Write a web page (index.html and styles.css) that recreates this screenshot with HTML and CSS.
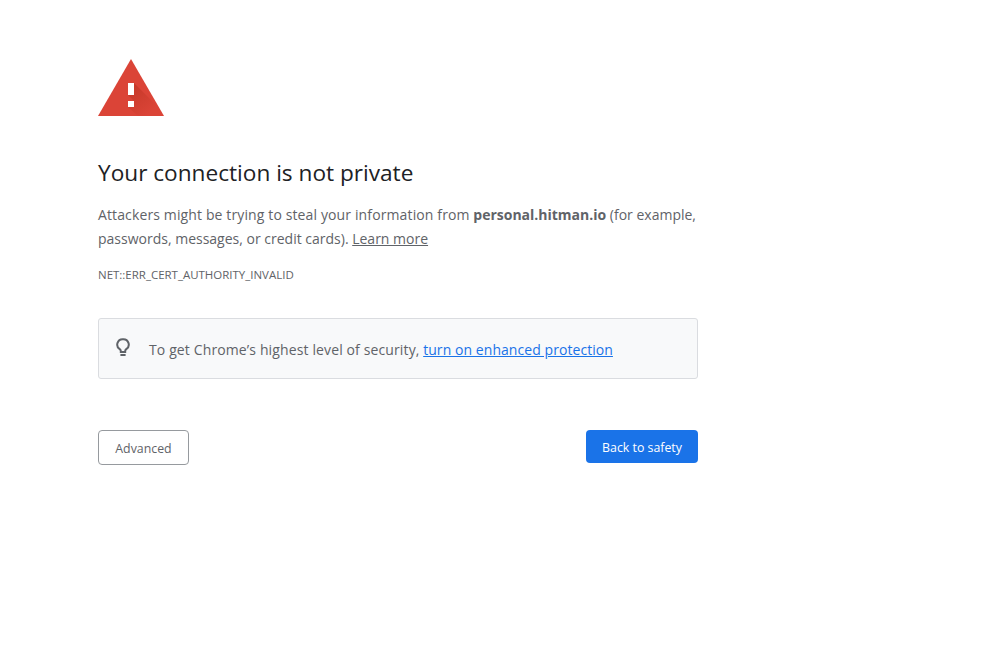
FILE: index.html
```html
<!DOCTYPE html>
<html lang="en">
<head>
<meta charset="utf-8">
<title>Privacy error</title>
<link rel="stylesheet" href="styles.css">
</head>
<body>
<main class="container">
  <svg class="alert-icon" viewBox="0 0 66 57" width="66" height="57" aria-hidden="true">
    <defs>
      <linearGradient id="shade" x1="0.1" y1="0.05" x2="0.75" y2="0.8">
        <stop offset="0" stop-color="#a52714" stop-opacity="0.4"/>
        <stop offset="1" stop-color="#a52714" stop-opacity="0"/>
      </linearGradient>
    </defs>
    <path class="alert-tri" d="M33 0 L66 57 L0 57 Z"/>
    <path fill="url(#shade)" d="M36 24 L58 46 L64.4 57 L40 57 L30 48 L36 42 L30 36 Z"/>
    <rect class="alert-mark" x="30" y="24" width="6" height="12"/>
    <rect class="alert-mark" x="30" y="42" width="6" height="6"/>
  </svg>
  <h1 class="title">Your connection is not private</h1>
  <p class="message"><span class="spaced">Attackers might be trying to steal your information from</span> <strong>personal.hitman.io</strong> (for example, passwords, messages, or credit cards). <a class="learn" href="#">Learn more</a></p>
  <div class="code">NET::ERR_CERT_AUTHORITY_INVALID</div>
  <div class="promo">
    <svg class="bulb" viewBox="0 0 16 20" width="16" height="20" aria-hidden="true">
      <path d="M8 1.2a5.4 5.4 0 0 0-3.3 9.9c.7.6 1.1 1.2 1.1 2v.9h4.4v-.9c0-.8.4-1.4 1.1-2A5.4 5.4 0 0 0 8 1.2z"/>
      <path d="M5.4 17h5.2"/>
    </svg>
    <span class="promo-text"><span class="spaced">To get Chrome’s highest level of security,</span> <a class="enhanced" href="#">turn on enhanced protection</a></span>
  </div>
  <div class="actions">
    <button class="btn-advanced">Advanced</button>
    <button class="btn-back">Back to safety</button>
  </div>
</main>
</body>
</html>
```
FILE: styles.css
```css
html, body { margin: 0; padding: 0; background: #fff; }
body { font-family: "Open Sans", "Noto Sans", sans-serif; color: #5f6368; }
.container { width: 600px; margin-left: 98px; padding-top: 59px; }
.alert-icon { display: block; }
.alert-tri { fill: #db4437; }
.alert-mark { fill: #fff; }
.title { margin: 40px 0 0; font-size: 22.64px; line-height: 34px; font-weight: 400; color: #202124; }
.message { margin: 13px 0 0; font-size: 14px; line-height: 24px; }
.message strong { font-weight: 700; }
.spaced { letter-spacing: 0.125px; }
.learn { color: #5f6368; }
.code { margin-top: 15px; font-size: 11.47px; line-height: 18px; }
.promo { margin-top: 34px; height: 61px; box-sizing: border-box; border: 1px solid #dadce0; border-radius: 3px; background: #f8f9fa; display: flex; align-items: center; padding-left: 16px; font-size: 14px; }
.promo-text { padding-top: 2px; }
.bulb { flex: none; margin-right: 18px; margin-top: -2px; fill: none; stroke: #5f6368; stroke-width: 2; }
.enhanced { color: #1a73e8; letter-spacing: 0.06px; }
.actions { margin-top: 51px; display: flex; justify-content: space-between; align-items: flex-start; }
button { font-family: inherit; font-size: 12.35px; border-radius: 4px; cursor: pointer; padding: 2px 0 0; }
.btn-advanced { width: 91px; height: 35px; background: #fff; color: #5f6368; border: 1px solid #969a9e; }
.btn-back { width: 112px; height: 33px; background: #1a73e8; color: #fff; border: 0; }
```
